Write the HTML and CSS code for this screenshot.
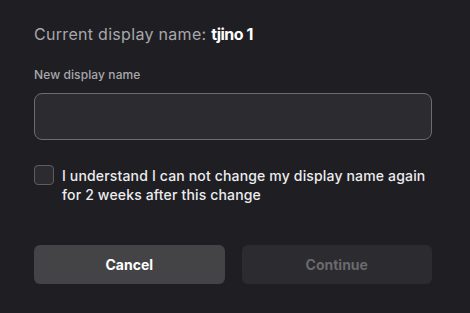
FILE: index.html
```html
<!DOCTYPE html>
<html>
<head>
<meta charset="utf-8">
<link rel="stylesheet" href="styles.css">
</head>
<body>
<div class="dialog">
  <h2 class="current">Current display name: <span class="name">tjino 1</span></h2>
  <label class="label" for="dn">New display name</label>
  <input class="input" id="dn" type="text">
  <div class="confirm">
    <span class="box"></span>
    <span class="confirm-text">I understand I can not change my display name again for 2 weeks after this change</span>
  </div>
  <div class="actions">
    <button class="btn cancel">Cancel</button>
    <button class="btn continue">Continue</button>
  </div>
</div>
</body>
</html>
```

FILE: styles.css
```css
html, body {
  margin: 0;
  padding: 0;
  background: #1f1e23;
}
body {
  width: 470px;
  height: 313px;
  overflow: hidden;
  font-family: Inter, "Noto Sans", sans-serif;
}
.dialog {
  width: 398px;
  padding: 24px 0 0 34px;
  display: flex;
  flex-direction: column;
}
.current {
  margin: 0;
  font-size: 16px;
  font-weight: 400;
  line-height: 20px;
  color: #a8a8ac;
  letter-spacing: 0.3px;
}
.name {
  color: #ffffff;
  font-weight: 700;
  letter-spacing: -0.5px;
}
.label {
  margin-top: 23px;
  font-size: 12px;
  line-height: 16px;
  color: #a8a8ac;
  font-weight: 500;
  letter-spacing: 0.1px;
}
.input {
  margin-top: 10px;
  box-sizing: border-box;
  height: 47px;
  width: 398px;
  background: #2c2b30;
  border: 1px solid #6c6b70;
  border-radius: 8px;
  outline: none;
}
.confirm {
  margin-top: 25px;
  display: flex;
  gap: 8px;
  align-items: flex-start;
}
.box {
  flex: none;
  box-sizing: border-box;
  width: 20px;
  height: 20px;
  border: 1px solid #5e5d62;
  border-radius: 4px;
  background: #2c2b30;
}
.confirm-text {
  font-size: 14px;
  line-height: 19px;
  color: #ececee;
  font-weight: 500;
  margin-top: 1px;
  letter-spacing: 0.16px;
}
.actions {
  margin-top: 41px;
  display: flex;
  gap: 17px;
}
.btn {
  flex: 1;
  height: 39px;
  border: none;
  border-radius: 6px;
  font-family: inherit;
  font-size: 14px;
  font-weight: 700;
}
.cancel {
  background: #444447;
  color: #ffffff;
}
.continue {
  background: #2c2b30;
  color: #6a696e;
}
```
